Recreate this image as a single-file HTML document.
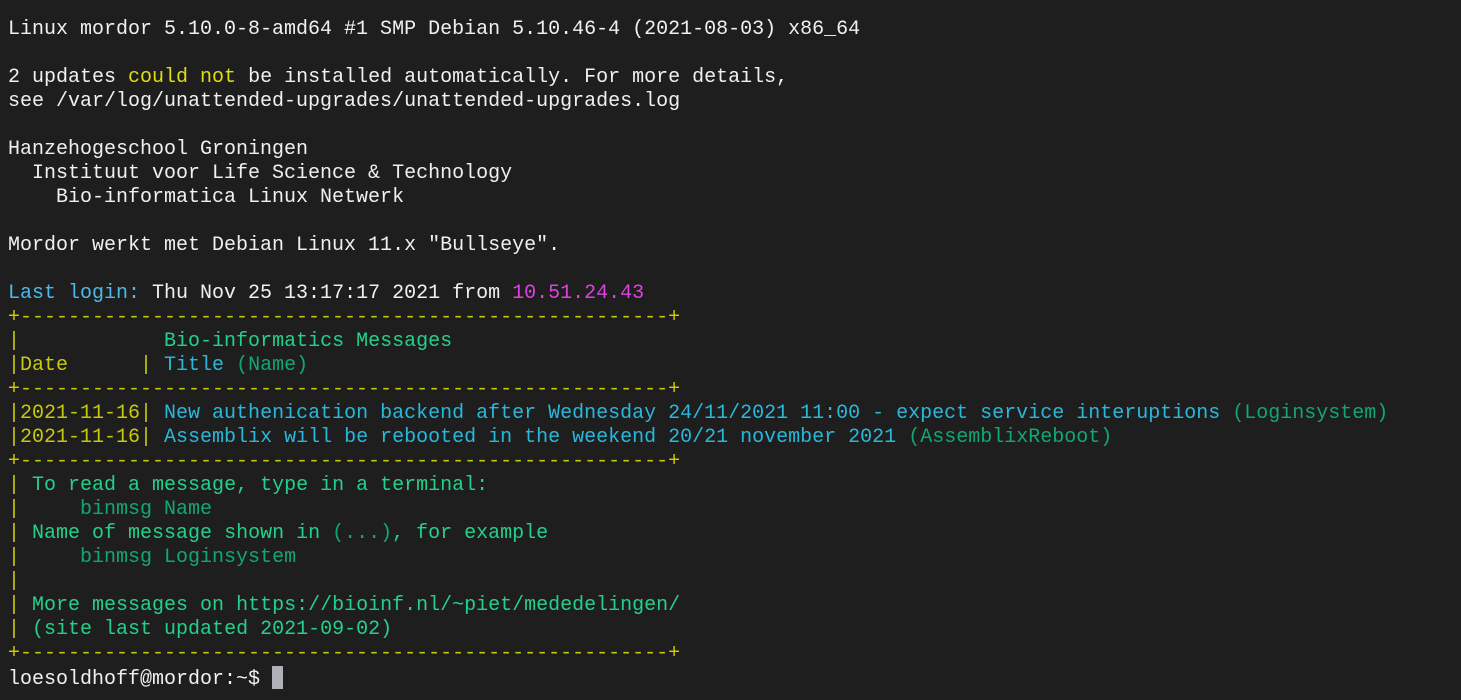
<!DOCTYPE html>
<html><head><meta charset="utf-8"><style>
html,body{margin:0;padding:0;background:#1e1e1e;width:1461px;height:700px;overflow:hidden}
pre{margin:0;position:absolute;left:8px;top:18px;font-family:"Liberation Mono",monospace;font-size:20px;line-height:24px;color:#f0f0f0;white-space:pre}
.y{color:#c8c80a}.w{color:#dede10}.g{color:#23d18b}.d{color:#0fa870}.b{color:#29b8db}.lb{color:#4fb8e8}.m{color:#e040e0}
.c{display:inline-block;width:11px;height:23px;background:#b0b0b8;vertical-align:-5px}
</style></head><body><pre>Linux mordor 5.10.0-8-amd64 #1 SMP Debian 5.10.46-4 (2021-08-03) x86_64

2 updates <span class="w">could not</span> be installed automatically. For more details,
see /var/log/unattended-upgrades/unattended-upgrades.log

Hanzehogeschool Groningen
  Instituut voor Life Science &amp; Technology
    Bio-informatica Linux Netwerk

Mordor werkt met Debian Linux 11.x "Bullseye".

<span class="lb">Last login:</span> Thu Nov 25 13:17:17 2021 from <span class="m">10.51.24.43</span>
<span class="y">+------------------------------------------------------+</span>
<span class="y">|</span>            <span class="g">Bio-informatics Messages</span>
<span class="y">|Date      | </span><span class="b">Title</span> <span class="d">(Name)</span>
<span class="y">+------------------------------------------------------+</span>
<span class="y">|2021-11-16|</span> <span class="b">New authenication backend after Wednesday 24/11/2021 11:00 - expect service interuptions</span> <span class="d">(Loginsystem)</span>
<span class="y">|2021-11-16|</span> <span class="b">Assemblix will be rebooted in the weekend 20/21 november 2021</span> <span class="d">(AssemblixReboot)</span>
<span class="y">+------------------------------------------------------+</span>
<span class="y">|</span> <span class="g">To read a message, type in a terminal:</span>
<span class="y">|</span>     <span class="d">binmsg Name</span>
<span class="y">|</span> <span class="g">Name of message shown in </span><span class="d">(...)</span><span class="g">, for example</span>
<span class="y">|</span>     <span class="d">binmsg Loginsystem</span>
<span class="y">|</span>
<span class="y">|</span> <span class="g">More messages on https://bioinf.nl/~piet/mededelingen/</span>
<span class="y">|</span> <span class="g">(site last updated 2021-09-02)</span>
<span class="y">+------------------------------------------------------+</span>
loesoldhoff@mordor:~$ <span class="c"></span></pre></body></html>
